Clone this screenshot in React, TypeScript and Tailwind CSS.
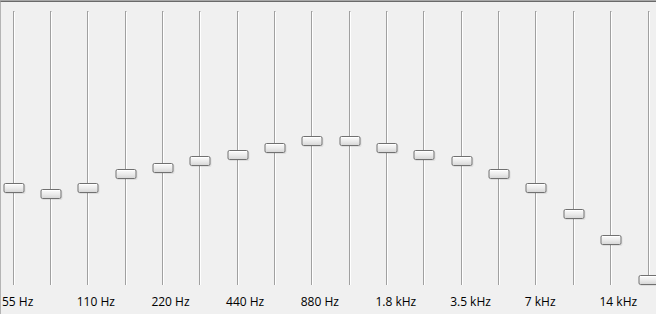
import React from 'react';

// thumb centre (y) per band, measured in page pixels
const bands = [188, 194, 188, 174, 168, 161, 155, 148, 141, 141, 148, 155, 161, 174, 188, 214, 240, 280];
const labels = ['55 Hz', '110 Hz', '220 Hz', '440 Hz', '880 Hz', '1.8 kHz', '3.5 kHz', '7 kHz', '14 kHz'];

const TRACK_TOP = 11;

const Slider: React.FC<{ center: number }> = ({ center }) => (
  <div className="relative w-[37.35px] h-[274px] shrink-0 flex justify-center">
    {/* groove */}
    <div className="w-[2px] h-full border-l border-t border-[#a0a0a0] border-r border-r-white" />
    {/* thumb */}
    <div
      className="absolute left-1/2 -translate-x-1/2 w-[21px] h-[10px] rounded-[2px] border border-[#707070] bg-gradient-to-b from-[#fbfbfb] via-[#ececec] to-[#d8d8d8] shadow-[inset_0_1px_0_#ffffff,1px_1px_0_rgba(0,0,0,0.08)]"
      style={{ top: center - 5 - TRACK_TOP }}
    />
  </div>
);

export default function App() {
  return (
    <div className="w-[656px] h-[314px] overflow-hidden bg-[#f0f0f0] border-t border-[#a8a8a8] font-['Open_Sans',sans-serif]">
      <div className="h-full border-t border-[#6a6a6a] border-l border-l-[#b4b4b4]">
        <div className="flex ml-[-6px] mt-[9px]">
          {bands.map((c, i) => (
            <Slider key={i} center={c} />
          ))}
        </div>
        <div className="flex ml-[1px] mt-[9px]">
          {labels.map((l) => (
            <div key={l} className="w-[74.7px] shrink-0 text-[12px] leading-4 text-black">
              {l}
            </div>
          ))}
        </div>
      </div>
    </div>
  );
}
